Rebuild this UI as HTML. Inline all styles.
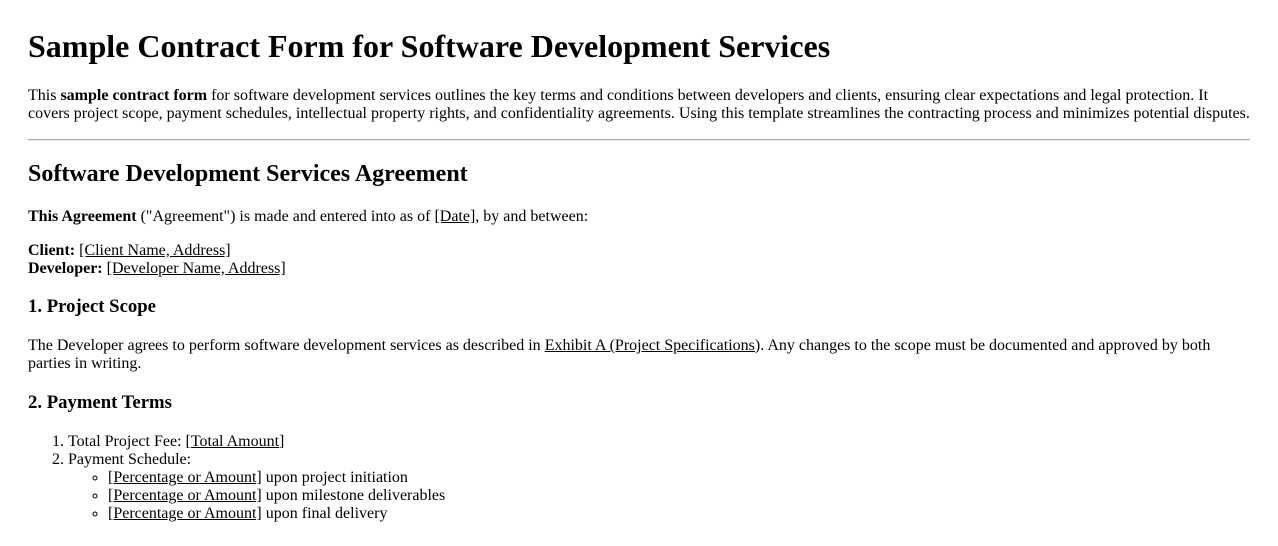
<!DOCTYPE html>
<html>
<head>
<meta charset="utf-8">
<style>
html,body{margin:0;background:#fff;}
body{padding:7px 28px;font-family:"Liberation Serif","Times New Roman",serif;font-size:16px;color:#000;}
h1{font-size:32px;margin:21.44px 0;}
h2{font-size:24px;margin:19.92px 0;}
h3{font-size:18.72px;margin:18.72px 0;}
p{margin:16px 0;}
hr{border:0;border-top:1px solid #aaa;border-bottom:1px solid #eee;margin:7px 0 8px;}
a{color:#000;text-decoration:underline;}
ol,ul{margin:16px 0;padding-left:40px;}
ol ul{margin:0;}
</style>
</head>
<body>
<h1>Sample Contract Form for Software Development Services</h1>
<p>This <b>sample contract form</b> for software development services outlines the key terms and conditions between developers and clients, ensuring clear expectations and legal protection. It covers project scope, payment schedules, intellectual property rights, and confidentiality agreements. Using this template streamlines the contracting process and minimizes potential disputes.</p>
<hr>
<h2>Software Development Services Agreement</h2>
<p><b>This Agreement</b> ("Agreement") is made and entered into as of <a>[Date]</a>, by and between:</p>
<p><b>Client:</b> <a>[Client Name, Address]</a><br><b>Developer:</b> <a>[Developer Name, Address]</a></p>
<h3>1. Project Scope</h3>
<p>The Developer agrees to perform software development services as described in <a>Exhibit A (Project Specifications</a>). Any changes to the scope must be documented and approved by both parties in writing.</p>
<h3>2. Payment Terms</h3>
<ol>
<li>Total Project Fee: <a>[Total Amount]</a></li>
<li>Payment Schedule:
<ul style="list-style-type:circle">
<li><a>[Percentage or Amount]</a> upon project initiation</li>
<li><a>[Percentage or Amount]</a> upon milestone deliverables</li>
<li><a>[Percentage or Amount]</a> upon final delivery</li>
</ul></li>
</ol>
</body>
</html>
